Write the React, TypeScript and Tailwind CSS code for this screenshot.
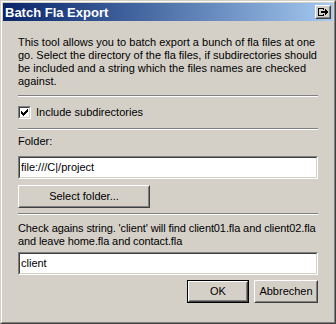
const face = "bg-[#d4d0c8]";

function Sunken({ children, className = "" }: { children?: React.ReactNode; className?: string }) {
  return (
    <div className={`border border-t-[#808080] border-l-[#808080] border-r-white border-b-white ${className}`}>
      <div className="h-full border border-t-[#404040] border-l-[#404040] border-r-[#d4d0c8] border-b-[#d4d0c8] bg-white">
        {children}
      </div>
    </div>
  );
}

function Raised({ children, className = "" }: { children?: React.ReactNode; className?: string }) {
  return (
    <div className={`border border-t-white border-l-white border-r-[#404040] border-b-[#404040] ${face} ${className}`}>
      <div className="flex h-full items-center justify-center border border-t-[#d4d0c8] border-l-[#d4d0c8] border-r-[#808080] border-b-[#808080]">
        {children}
      </div>
    </div>
  );
}

function Separator({ className = "" }: { className?: string }) {
  return <div className={`h-[2px] border-t border-t-[#808080] border-b border-b-white ${className}`} />;
}

function TextField({ value, className = "" }: { value: string; className?: string }) {
  return (
    <Sunken className={`h-[23px] ${className}`}>
      <div className="flex h-full items-center pl-[1px] text-black">{value}</div>
    </Sunken>
  );
}

export default function App() {
  return (
    <div
      className={`h-[324px] w-[336px] border border-t-[#d4d0c8] border-l-[#d4d0c8] border-r-[#404040] border-b-[#404040] ${face}`}
      style={{ fontFamily: '"Liberation Sans", Arial, sans-serif' }}
    >
      <div className="flex h-full flex-col border border-t-white border-l-white border-r-[#808080] border-b-[#808080] p-[1px]">
        {/* title bar */}
        <div className="flex h-[18px] items-center justify-between bg-gradient-to-r from-[#0a246a] to-[#a6caf0] pl-[2px] pr-[2px]">
          <span className="text-[13px] font-bold leading-none text-white">Batch Fla Export</span>
          <Raised className="h-[14px] w-[16px]">
            <svg width="10" height="8" viewBox="0 0 10 8" shapeRendering="crispEdges">
              <path d="M0 0h6v2h-1v-1h-4v6h4v-1h1v2h-6z" fill="black" />
              <path d="M3 3h4v-2l3 3-3 3v-2h-4z" fill="black" />
            </svg>
          </Raised>
        </div>

        <div className="flex flex-col px-[15px] text-[11px] leading-[13px] text-black">
          <p className="mt-[15px]">
            This tool allows you to batch export a bunch of fla files at one go. Select the directory of the fla files, if
            subdirectories should be included and a string which the files names are checked against.
          </p>

          <Separator className="mt-[7px]" />

          <label className="mt-[9px] flex items-center">
            <Sunken className="h-[13px] w-[13px]">
              <svg width="11" height="11" viewBox="0 0 11 11" shapeRendering="crispEdges" className="-ml-px -mt-px">
                <path d="M2 4h1v1h1v1h1v-1h1v-1h1v-1h1v-1h1v3h-1v1h-1v1h-1v1h-1v1h-1v-1h-1v-1h-1z" fill="black" />
              </svg>
            </Sunken>
            <span className="ml-[5px]">Include subdirectories</span>
          </label>

          <Separator className="mt-[9px]" />

          <div className="mt-[5px]">Folder:</div>

          <TextField value="file:///C|/project" className="mt-[8px]" />

          <Raised className="mt-[6px] h-[23px] w-[132px]">
            <span>Select folder...</span>
          </Raised>

          <Separator className="mt-[5px]" />

          <p className="mt-[7px] whitespace-nowrap tracking-[-0.1px]">
            Check agains string. 'client' will find client01.fla and client02.fla
            <br />
            and leave home.fla and contact.fla
          </p>

          <TextField value="client" className="mt-[4px]" />

          <div className="mt-[5px] flex justify-end gap-[5px]">
            <div className="border border-black">
              <Raised className="h-[21px] w-[60px]">
                <span>OK</span>
              </Raised>
            </div>
            <Raised className="h-[23px] w-[64px]">
              <span>Abbrechen</span>
            </Raised>
          </div>
        </div>
      </div>
    </div>
  );
}
